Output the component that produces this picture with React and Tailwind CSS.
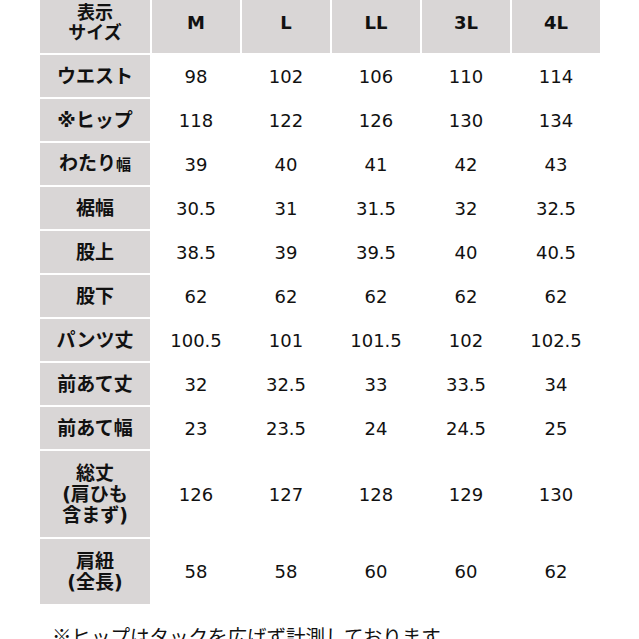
import React from "react";

const sizes = ["M", "L", "LL", "3L", "4L"];
const rows = [
  { label: "ウエスト", vals: ["98", "102", "106", "110", "114"], h: "h-[42px]" },
  { label: "※ヒップ", vals: ["118", "122", "126", "130", "134"], h: "h-[42px]" },
  { label: "わたり", small: "幅", vals: ["39", "40", "41", "42", "43"], h: "h-[42px]" },
  { label: "裾幅", vals: ["30.5", "31", "31.5", "32", "32.5"], h: "h-[42px]" },
  { label: "股上", vals: ["38.5", "39", "39.5", "40", "40.5"], h: "h-[42px]" },
  { label: "股下", vals: ["62", "62", "62", "62", "62"], h: "h-[42px]" },
  { label: "パンツ丈", vals: ["100.5", "101", "101.5", "102", "102.5"], h: "h-[42px]" },
  { label: "前あて丈", vals: ["32", "32.5", "33", "33.5", "34"], h: "h-[42px]" },
  { label: "前あて幅", vals: ["23", "23.5", "24", "24.5", "25"], h: "h-[42px]" },
  { lines: ["総丈", "(肩ひも", "含まず)"], vals: ["126", "127", "128", "129", "130"], h: "h-[86px]" },
  { lines: ["肩紐", "(全長)"], vals: ["58", "58", "60", "60", "62"], h: "h-[65px]" },
];

export default function App() {
  return (
    <div
      className="w-[639px] h-[639px] overflow-hidden bg-white text-[#111]"
      style={{ fontFamily: '"DejaVu Sans", "Noto Sans CJK JP", sans-serif' }}
    >
      <div className="ml-[40px] mt-[-9px] grid grid-cols-[110px_repeat(5,88px)] gap-[2px]">
        <div className="h-[62px] bg-[#d9d6d6] flex flex-col items-center justify-center font-bold text-[18px] leading-[20px] pt-[2px]">
          <span>表示</span>
          <span>サイズ</span>
        </div>
        {sizes.map((s) => (
          <div
            key={s}
            className="h-[62px] bg-[#d9d6d6] flex items-center justify-center font-bold text-[18px] pt-[1px]"
          >
            {s}
          </div>
        ))}
        {rows.map((r, i) => (
          <React.Fragment key={i}>
            <div
              className={`${r.h} bg-[#d9d6d6] flex flex-col items-center justify-center font-bold text-[19px] leading-[21px]`}
            >
              {r.lines ? (
                r.lines.map((l) => <span key={l}>{l}</span>)
              ) : (
                <span>
                  {r.label}
                  {r.small && <span className="text-[15px]">{r.small}</span>}
                </span>
              )}
            </div>
            {r.vals.map((v, j) => (
              <div
                key={j}
                className={`${r.h} flex items-center justify-center text-[18px] font-normal`}
              >
                {v}
              </div>
            ))}
          </React.Fragment>
        ))}
      </div>
      <div
        className="mt-[21px] ml-[52px] text-[19.5px] leading-[22px] whitespace-nowrap"
        style={{ fontFamily: '"Noto Sans CJK JP", sans-serif' }}
      >
        ※ヒップはタックを広げず計測しております。
      </div>
    </div>
  );
}
